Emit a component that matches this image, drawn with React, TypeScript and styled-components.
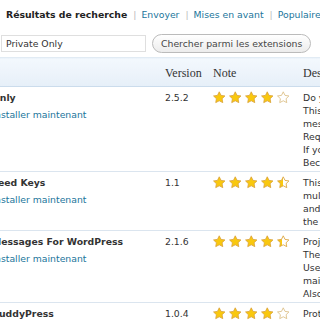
import React from "react";
import styled, { createGlobalStyle } from "styled-components";

const Global = createGlobalStyle`
  html, body { margin: 0; padding: 0; background: #fff; overflow: hidden; }
  body { font-family: "DejaVu Sans", Verdana, sans-serif; font-size: 9.3px; color: #333; }
`;

const Page = styled.div`
  width: 320px;
  height: 320px;
  overflow: hidden;
  padding-top: 8px;
  box-sizing: border-box;
`;

const Tabs = styled.div`
  display: flex;
  align-items: baseline;
  padding-left: 6px;
  line-height: 13px;
  white-space: nowrap;
`;

const CurrentTab = styled.span`
  font-weight: bold;
  color: #222;
`;

const TabLink = styled.a`
  color: #21759b;
  text-decoration: none;
`;

const Sep = styled.span`
  color: #bbb;
  padding: 0 5px 0 6px;
`;

const SearchRow = styled.form`
  display: flex;
  align-items: center;
  gap: 6px;
  margin: 13px 0 4px 1px;
`;

const SearchInput = styled.input`
  box-sizing: border-box;
  width: 145px;
  height: 17px;
  border: 1px solid #dfdfdf;
  padding: 0 4px;
  font-family: "DejaVu Sans", sans-serif;
  font-size: 9.3px;
  color: #333;
  background: #fff;
  outline: none;
`;

const SearchButton = styled.button`
  box-sizing: border-box;
  height: 19px;
  padding: 0 8px;
  border: 1px solid #bbb;
  border-radius: 11px;
  background: linear-gradient(#ffffff, #ececec);
  font-family: "DejaVu Sans", sans-serif;
  font-size: 9.3px;
  color: #464646;
  white-space: nowrap;
`;

const TableClip = styled.div`
  width: 320px;
  overflow: hidden;
`;

const Table = styled.table`
  margin-left: -56px;
  width: 640px;
  table-layout: fixed;
  border-collapse: collapse;
  border-spacing: 0;
`;

const Th = styled.th`
  text-align: left;
  font-family: "Liberation Serif", "Times New Roman", serif;
  font-weight: normal;
  font-size: 12px;
  color: #333;
  line-height: 14px;
  padding: 8px 7px 6px;
  background: linear-gradient(#f3f8fd, #e6eff8);
  border-top: 1px solid #e1ebf4;
  border-bottom: 1px solid #cbdcec;
  white-space: nowrap;
`;

const Td = styled.td`
  vertical-align: top;
  padding: 4px 7px 2px;
  line-height: 13px;
  border-bottom: 1px solid #dbe5ef;
  white-space: nowrap;
  overflow: hidden;
`;

const Title = styled.strong`
  display: block;
  color: #333;
`;

const Actions = styled.div`
  margin-top: 4px;
`;

const ActionLink = styled.a`
  color: #21759b;
  text-decoration: none;
`;

const ActionSep = styled.span`
  color: #bbb;
`;

const Stars = styled.div`
  display: flex;
  gap: 3.5px;
  margin-left: -0.5px;
`;

const DescLine = styled.div``;

const STAR =
  "M6.5 0.6 L8.32 4.29 L12.4 4.88 L9.45 7.76 L10.15 11.82 L6.5 9.9 L2.85 11.82 L3.55 7.76 L0.6 4.88 L4.68 4.29 Z";

function Star({ fill, id }: { fill: number; id: string }) {
  return (
    <svg width="13" height="13" viewBox="0 0 13 13">
      <defs>
        <linearGradient id={id} x1="0" x2="1" y1="0" y2="0">
          <stop offset={`${fill * 100}%`} stopColor="#f9c80e" />
          <stop offset={`${fill * 100}%`} stopColor="#ffffff" />
        </linearGradient>
      </defs>
      <path
        d={STAR}
        fill={`url(#${id})`}
        stroke={fill > 0 ? "#dba53c" : "#dcbf86"}
        strokeWidth="0.9"
        strokeLinejoin="round"
      />
    </svg>
  );
}

function Rating({ value, name }: { value: number; name: string }) {
  return (
    <Stars>
      {[0, 1, 2, 3, 4].map((i) => {
        const f = Math.max(0, Math.min(1, value - i));
        return <Star key={i} fill={f} id={`${name}-${i}`} />;
      })}
    </Stars>
  );
}

const rows = [
  {
    name: "Private Only",
    version: "2.5.2",
    rating: 4,
    desc: [
      "Do you want your blog to be private?",
      "This plugin redirects visitors to the login",
      "message page unless they are logged in.",
      "Requires WordPress 2.7 or higher.",
      "If you want a public blog, do not use it.",
      "Because it hides your content from search.",
    ],
  },
  {
    name: "Private Feed Keys",
    version: "1.1",
    rating: 4.5,
    desc: [
      "This plugin generates private feed keys for",
      "multiple users of a private blog,",
      "and lets them read the feeds with",
      "the key of their own account.",
    ],
  },
  {
    name: "Private Messages For WordPress",
    version: "2.1.6",
    rating: 4.4,
    desc: [
      "Project of private messages system for",
      "The WordPress blogs.",
      "Users can send messages to each other,",
      "maintain an inbox and an outbox.",
      "Also notifies users by email.",
    ],
  },
  {
    name: "Private BuddyPress",
    version: "1.0.4",
    rating: 4,
    desc: ["Protect your BuddyPress installation from"],
  },
];

export default function App() {
  return (
    <Page>
      <Global />
      <Tabs>
        <CurrentTab>Résultats de recherche</CurrentTab>
        <Sep>|</Sep>
        <TabLink href="#">Envoyer</TabLink>
        <Sep>|</Sep>
        <TabLink href="#">Mises en avant</TabLink>
        <Sep>|</Sep>
        <TabLink href="#">Populaire</TabLink>
      </Tabs>
      <SearchRow onSubmit={(e) => e.preventDefault()}>
        <SearchInput type="text" defaultValue="Private Only" />
        <SearchButton type="submit">Chercher parmi les extensions</SearchButton>
      </SearchRow>
      <TableClip>
        <Table>
          <colgroup>
            <col style={{ width: 214 }} />
            <col style={{ width: 48 }} />
            <col style={{ width: 90 }} />
            <col />
          </colgroup>
          <thead>
            <tr>
              <Th>Nom</Th>
              <Th>Version</Th>
              <Th>Note</Th>
              <Th>Description</Th>
            </tr>
          </thead>
          <tbody>
            {rows.map((r, idx) => (
              <tr key={r.name}>
                <Td>
                  <Title>{r.name}</Title>
                  <Actions>
                    <ActionLink href="#">Détails</ActionLink>
                    <ActionSep> | </ActionSep>
                    <ActionLink href="#">Installer maintenant</ActionLink>
                  </Actions>
                </Td>
                <Td>{r.version}</Td>
                <Td>
                  <Rating value={r.rating} name={`r${idx}`} />
                </Td>
                <Td>
                  {r.desc.map((l, i) => (
                    <DescLine key={i}>{l}</DescLine>
                  ))}
                </Td>
              </tr>
            ))}
          </tbody>
        </Table>
      </TableClip>
    </Page>
  );
}
